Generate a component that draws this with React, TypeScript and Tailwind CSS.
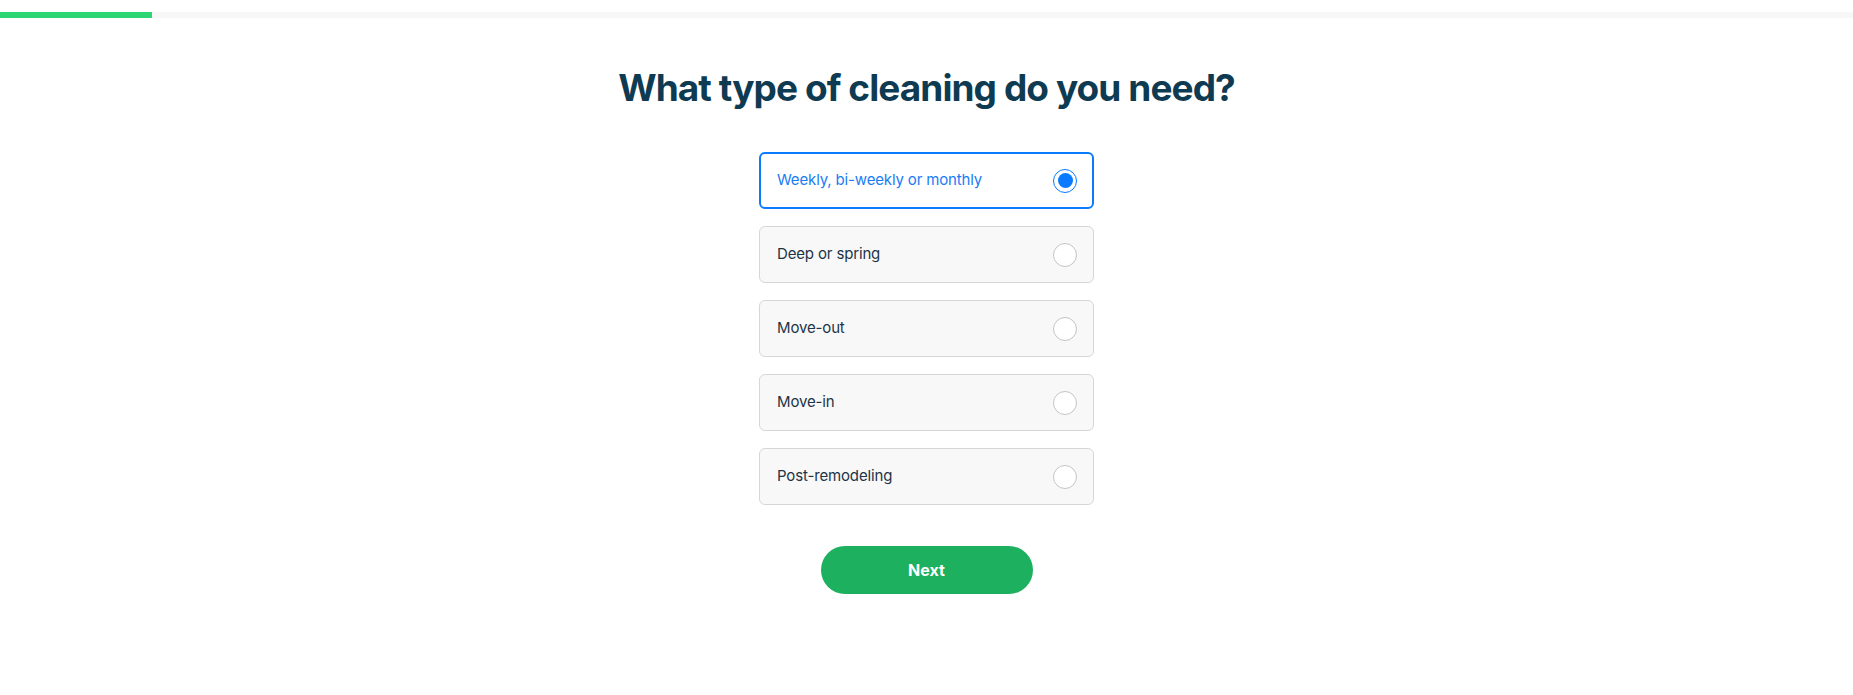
import { useState } from "react";

const options = [
  "Weekly, bi-weekly or monthly",
  "Deep or spring",
  "Move-out",
  "Move-in",
  "Post-remodeling",
];

export default function App() {
  const [selected, setSelected] = useState(0);

  return (
    <div className="min-h-screen bg-white font-['Inter',sans-serif]">
      {/* progress */}
      <div className="mt-3 h-[6px] w-full bg-[#f7f7f7]">
        <div className="h-full w-[152px] bg-[#2ed573]" />
      </div>

      <div className="flex flex-col items-center">
        <h1 className="mt-[44px] text-[37px] leading-[52px] font-bold tracking-[-0.025em] text-[#0f3b52]">
          What type of cleaning do you need?
        </h1>

        <div className="mt-[38px] flex w-[335px] flex-col gap-[17px]">
          {options.map((label, i) => {
            const active = i === selected;
            return (
              <button
                key={label}
                onClick={() => setSelected(i)}
                className={
                  active
                    ? "flex h-[57px] items-center justify-between rounded-md border-2 border-[#0a7aff] bg-white pl-[16px] pr-[15px] text-left"
                    : "flex h-[57px] items-center justify-between rounded-md border border-[#d6d6d6] bg-[#f8f8f8] pl-[17px] pr-[16px] text-left"
                }
              >
                <span
                  className={
                    active
                      ? "text-[15px] tracking-[-0.01em] text-[#1a7cf5]"
                      : "text-[15px] tracking-[-0.01em] text-[#1c3447]"
                  }
                >
                  {label}
                </span>
                {active ? (
                  <span className="flex h-6 w-6 items-center justify-center rounded-full border-[1.5px] border-[#0a7aff] bg-white">
                    <span className="h-[15px] w-[15px] rounded-full bg-[#0a7aff]" />
                  </span>
                ) : (
                  <span className="h-6 w-6 rounded-full border border-[#c4c4c4] bg-white" />
                )}
              </button>
            );
          })}
        </div>

        <button className="mt-[41px] h-12 w-[212px] rounded-full bg-[#1db05f] text-[16px] font-bold text-white">
          Next
        </button>
      </div>
    </div>
  );
}
